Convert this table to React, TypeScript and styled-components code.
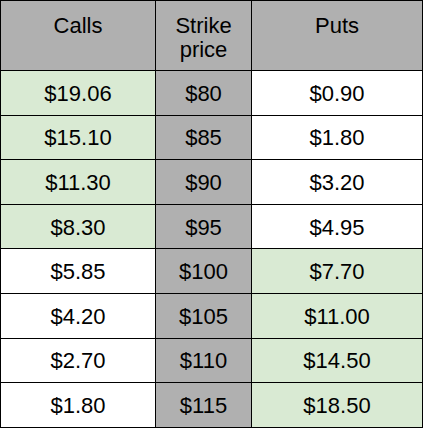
import { createGlobalStyle } from "styled-components";
import styled from "styled-components";

const GlobalStyle = createGlobalStyle`
  html, body {
    margin: 0;
    padding: 0;
    background: #ffffff;
  }
  body {
    font-family: "Liberation Sans", Arial, sans-serif;
    color: #000000;
  }
`;

const Grid = styled.div`
  display: grid;
  grid-template-columns: 154px 95px 170px;
  grid-template-rows: 69px repeat(8, 43.6px);
  gap: 1px;
  padding: 1px;
  width: fit-content;
  background: #000000;
`;

const HeadCell = styled.div`
  background: #b0b0b0;
  text-align: center;
  padding-top: 13px;
  font-size: 22px;
  line-height: 24px;
`;

const Cell = styled.div<{ $tone: "white" | "green" | "gray" }>`
  display: flex;
  align-items: center;
  justify-content: center;
  padding-top: 2px;
  font-size: 22px;
  background: ${(p) =>
    p.$tone === "green" ? "#d9ead3" : p.$tone === "gray" ? "#b0b0b0" : "#ffffff"};
`;

type Row = { call: string; strike: string; put: string };

const rows: Row[] = [
  { call: "$19.06", strike: "$80", put: "$0.90" },
  { call: "$15.10", strike: "$85", put: "$1.80" },
  { call: "$11.30", strike: "$90", put: "$3.20" },
  { call: "$8.30", strike: "$95", put: "$4.95" },
  { call: "$5.85", strike: "$100", put: "$7.70" },
  { call: "$4.20", strike: "$105", put: "$11.00" },
  { call: "$2.70", strike: "$110", put: "$14.50" },
  { call: "$1.80", strike: "$115", put: "$18.50" },
];

export default function App() {
  return (
    <>
      <GlobalStyle />
      <Grid>
        <HeadCell>Calls</HeadCell>
        <HeadCell>
          Strike
          <br />
          price
        </HeadCell>
        <HeadCell>Puts</HeadCell>
        {rows.map((row, i) => {
          // strikes below $100 put the calls in the money, the rest the puts
          const callsIn = i < 4;
          return [
            <Cell key={`c${i}`} $tone={callsIn ? "green" : "white"}>
              {row.call}
            </Cell>,
            <Cell key={`s${i}`} $tone="gray">
              {row.strike}
            </Cell>,
            <Cell key={`p${i}`} $tone={callsIn ? "white" : "green"}>
              {row.put}
            </Cell>,
          ];
        })}
      </Grid>
    </>
  );
}
